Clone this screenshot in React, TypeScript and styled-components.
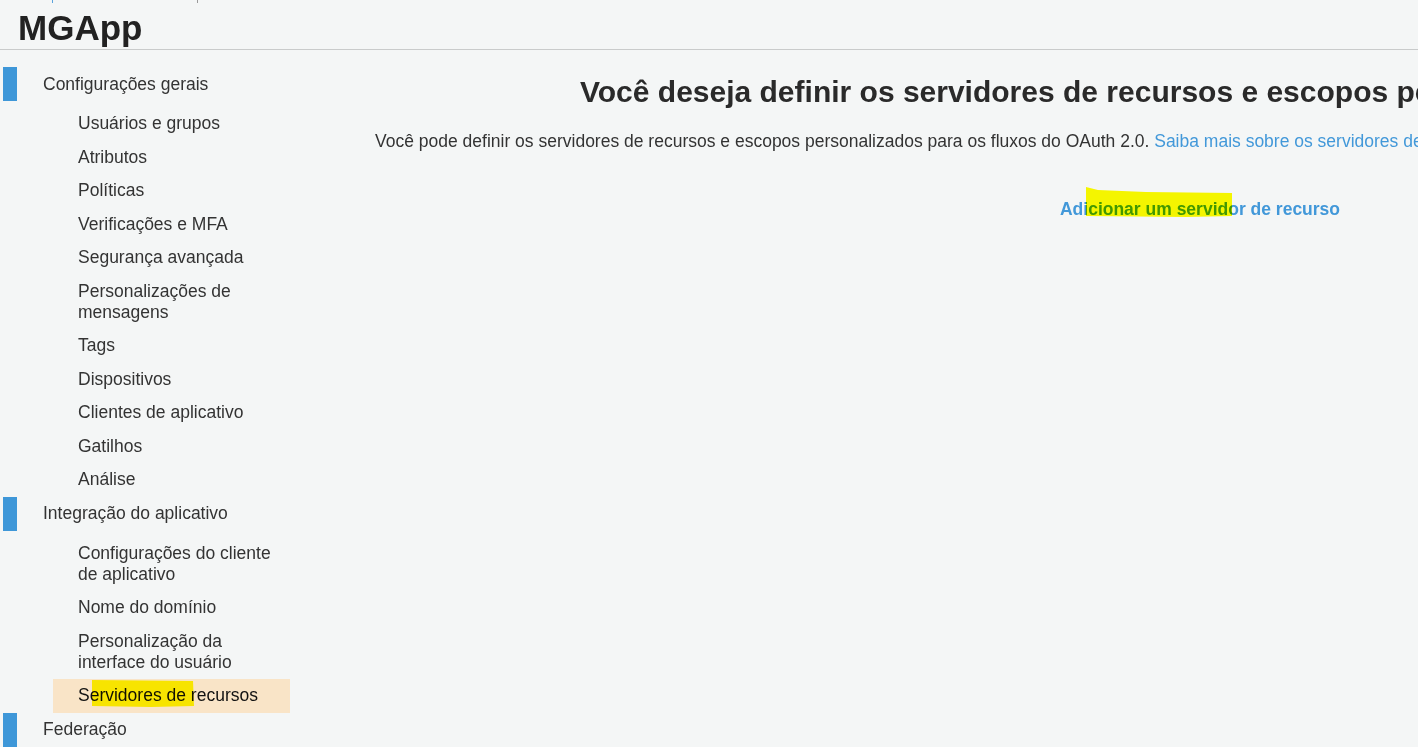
import React from "react"
import styled, { createGlobalStyle } from "styled-components"

const GlobalStyle = createGlobalStyle`
  html, body {
    margin: 0;
    padding: 0;
    background: #f4f6f6;
    overflow: hidden;
  }
  body {
    font-family: "Liberation Sans", Arial, sans-serif;
    color: #333;
  }
`

const Page = styled.div`
  width: 1418px;
  height: 747px;
  overflow: hidden;
  background: #f4f6f6;
`

const Crumbs = styled.div`
  height: 4px;
  display: flex;
  align-items: flex-start;
`

const CrumbMark = styled.span<{ $left: number; $color: string }>`
  display: block;
  width: 1px;
  height: 3px;
  margin-left: ${({ $left }) => $left}px;
  background: ${({ $color }) => $color};
`

const Header = styled.header`
  height: 46px;
  border-bottom: 1px solid #c9cbcb;
  padding-left: 18px;
  box-sizing: border-box;
  display: flex;
  align-items: flex-end;
`

const AppName = styled.h1`
  margin: 0 0 1px;
  font-size: 35px;
  line-height: 40px;
  font-weight: bold;
  color: #222;
`

const Body = styled.div`
  display: flex;
  padding-top: 17px;
`

const Sidebar = styled.nav`
  width: 300px;
  flex-shrink: 0;
  padding-left: 3px;
  box-sizing: border-box;
`

const Section = styled.div`
  display: flex;
  flex-direction: column;
`

const SectionHead = styled.div`
  display: flex;
  align-items: center;
  height: 34px;
  font-size: 17.5px;
  color: #333;
`

const Marker = styled.span`
  width: 14px;
  height: 34px;
  background: #3e97d8;
  margin-right: 26px;
`

const SubList = styled.ul`
  list-style: none;
  margin: 6px 0 0;
  padding: 0 0 0 50px;
`

const SubItem = styled.li<{ $active?: boolean }>`
  position: relative;
  width: 237px;
  box-sizing: border-box;
  padding: 6.25px 8px 6.25px 25px;
  font-size: 17.5px;
  line-height: 21px;
  color: ${({ $active }) => ($active ? "#111" : "#333")};
  background: ${({ $active }) => ($active ? "#f9e4c7" : "transparent")};
`

const Highlighter = styled.svg`
  position: absolute;
  pointer-events: none;
  mix-blend-mode: darken;
`

const Main = styled.main`
  flex-shrink: 0;
  width: 1650px;
  padding-left: 75px;
`

const Title = styled.h2`
  margin: 0;
  padding: 9px 0 0 205px;
  white-space: nowrap;
  font-size: 30px;
  line-height: 32px;
  font-weight: bold;
  color: #2a2a2a;
`

const Lead = styled.p`
  margin: 23px 0 0;
  white-space: nowrap;
  font-size: 17.5px;
  line-height: 21px;
  color: #333;
`

const Link = styled.a<{ $bold?: boolean }>`
  color: #4298d9;
  text-decoration: none;
  font-weight: ${({ $bold }) => ($bold ? "bold" : "normal")};
`

const Actions = styled.div`
  display: flex;
  justify-content: center;
  margin-top: 47px;
  font-size: 17.5px;
  line-height: 21px;
`

const ActionWrap = styled.span`
  position: relative;
`

const general = [
  "Usuários e grupos",
  "Atributos",
  "Políticas",
  "Verificações e MFA",
  "Segurança avançada",
  "Personalizações de mensagens",
  "Tags",
  "Dispositivos",
  "Clientes de aplicativo",
  "Gatilhos",
  "Análise",
]

const integration = [
  "Configurações do cliente de aplicativo",
  "Nome do domínio",
  "Personalização da interface do usuário",
  "Servidores de recursos",
]

export default function App() {
  return (
    <Page>
      <GlobalStyle />
      <Crumbs>
        <CrumbMark $left={52} $color="#5aa3dd" />
        <CrumbMark $left={144} $color="#9a9a9a" />
      </Crumbs>
      <Header>
        <AppName>MGApp</AppName>
      </Header>
      <Body>
        <Sidebar>
          <Section>
            <SectionHead>
              <Marker />
              Configurações gerais
            </SectionHead>
            <SubList>
              {general.map((label) => (
                <SubItem key={label}>{label}</SubItem>
              ))}
            </SubList>
          </Section>
          <Section>
            <SectionHead>
              <Marker />
              Integração do aplicativo
            </SectionHead>
            <SubList>
              {integration.map((label) => {
                const active = label === "Servidores de recursos"
                return (
                  <SubItem key={label} $active={active}>
                    {label}
                    {active && (
                      <Highlighter
                        width="104"
                        height="29"
                        viewBox="0 0 104 29"
                        style={{ left: 38, top: 0 }}
                      >
                        <path d="M1 1 L102 2 L103 27 L60 28 L1 27 Z" fill="#f7e600" />
                      </Highlighter>
                    )}
                  </SubItem>
                )
              })}
            </SubList>
          </Section>
          <Section>
            <SectionHead>
              <Marker />
              Federação
            </SectionHead>
          </Section>
        </Sidebar>
        <Main>
          <Title>
            Você deseja definir os servidores de recursos e escopos personalizados?
          </Title>
          <Lead>
            Você pode definir os servidores de recursos e escopos personalizados para os fluxos do
            OAuth 2.0. <Link href="#">Saiba mais sobre os servidores de recursos.</Link>
          </Lead>
          <Actions>
            <ActionWrap>
              <Link href="#" $bold>
                Adicionar um servidor de recurso
              </Link>
              <Highlighter
                width="148"
                height="31"
                viewBox="0 0 148 31"
                style={{ left: 26, top: -12 }}
              >
                <path d="M0 0 L12 3 L60 5 L146 6 L146 29 L100 30 L0 29 Z" fill="#f5f500" />
              </Highlighter>
            </ActionWrap>
          </Actions>
        </Main>
      </Body>
    </Page>
  )
}
